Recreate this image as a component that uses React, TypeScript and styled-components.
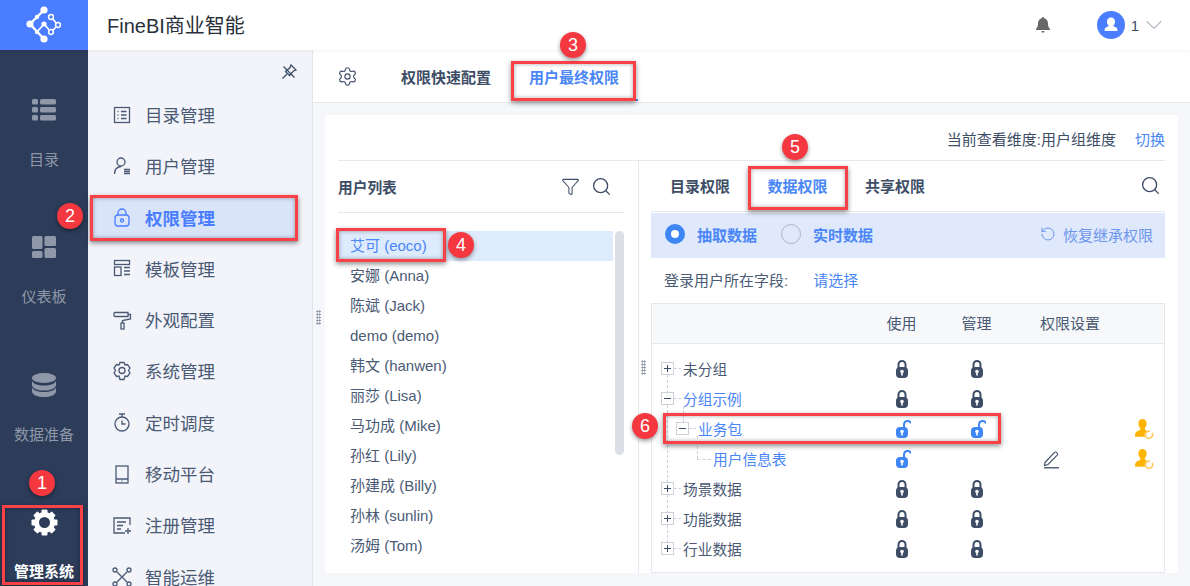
import React from "react";
import styled, { createGlobalStyle } from "styled-components";
import { Filter, Search, RotateCcw, Settings, ChevronDown } from "lucide-react";

const GlobalStyle = createGlobalStyle`
  html, body { margin: 0; padding: 0; background: #f5f7fa; }
  * { box-sizing: border-box; }
  body { font-family: "Liberation Sans", "Noto Sans CJK SC", sans-serif; color: #3d4d66; }
`;

const BLUE = "#4a86f7";
const DARK = "#3d4d66";

const Page = styled.div`
  position: relative;
  width: 1190px;
  height: 586px;
  overflow: hidden;
  display: flex;
  flex-direction: column;
`;

const TopBar = styled.header`
  height: 50px;
  flex: none;
  display: flex;
  align-items: center;
  background: #fff;
  position: relative;
  z-index: 2;
  box-shadow: 0 1px 4px rgba(0, 0, 0, 0.05);
`;

const LogoBox = styled.div`
  width: 88px;
  height: 50px;
  background: #4a7dff;
  display: flex;
  align-items: center;
  justify-content: center;
`;

const AppTitle = styled.div`
  margin-left: 19px;
  padding-bottom: 2px;
  font-size: 20px;
  color: #2a2f3a;
  flex: 1;
`;

const BellWrap = styled.div`
  width: 16px;
  height: 18px;
  margin-right: 46px;
  display: flex;
`;

const Avatar = styled.div`
  width: 28px;
  height: 28px;
  border-radius: 50%;
  background: #4a7dff;
  display: flex;
  align-items: center;
  justify-content: center;
`;

const UserNumber = styled.span`
  margin-left: 6px;
  font-size: 15px;
  color: #3d4d66;
`;

const UserChevron = styled.div`
  margin: 0 22px 0 1px;
  display: flex;
  color: #9aa5b4;
`;

const Body = styled.div`
  flex: 1;
  display: flex;
  min-height: 0;
`;

const Rail = styled.nav`
  width: 88px;
  flex: none;
  background: #2c3c59;
  display: flex;
  flex-direction: column;
`;

const RailItem = styled.div<{ $active?: boolean }>`
  height: 137.4px;
  flex: none;
  padding-top: 48px;
  display: flex;
  flex-direction: column;
  align-items: center;
  color: ${(p) => (p.$active ? "#fff" : "#8f98a8")};
`;

const RailIcon = styled.div`
  height: 24px;
  display: flex;
  align-items: center;
  justify-content: center;
`;

const RailLabel = styled.div<{ $active?: boolean }>`
  margin-top: 28px;
  line-height: 20px;
  font-size: 15px;
  font-weight: ${(p) => (p.$active ? 700 : 400)};
`;

const SideMenu = styled.aside`
  width: 225px;
  flex: none;
  background: #f2f4f9;
  border-right: 1px solid #e2e5ea;
`;

const PinRow = styled.div`
  height: 43px;
  padding: 13px 14px 0 0;
  display: flex;
  justify-content: flex-end;
  color: #3d4d66;
`;

const MenuList = styled.div`
  margin-right: 14px;
  display: flex;
  flex-direction: column;
  gap: 5.3px;
`;

const MenuItem = styled.div<{ $active?: boolean }>`
  height: 46px;
  flex: none;
  padding: 0 0 3px 22px;
  margin-left: 2px;
  display: flex;
  align-items: center;
  gap: 11px;
  font-size: 17.5px;
  font-weight: ${(p) => (p.$active ? 700 : 400)};
  color: ${(p) => (p.$active ? "#4a7dff" : "#4a5a75")};
  background: ${(p) => (p.$active ? "#d9e4f8" : "transparent")};
`;

const MenuGlyph = styled.svg`
  width: 24px;
  height: 24px;
  margin-left: -2px;
  flex: none;
  fill: none;
  stroke: currentColor;
  stroke-width: 1.3;
`;

const Main = styled.main`
  flex: 1;
  min-width: 0;
  display: flex;
  flex-direction: column;
`;

const TabBar = styled.div`
  height: 53px;
  flex: none;
  background: #fff;
  border-bottom: 1px solid #e6e8ec;
  display: flex;
  align-items: center;
  padding-left: 24px;
`;

const GearWrap = styled.div`
  width: 64px;
  display: flex;
  color: ${DARK};
`;

const TopTab = styled.div`
  width: 110px;
  font-size: 15px;
  font-weight: 700;
  color: ${DARK};
`;

const ActiveTopTab = styled.div`
  width: 127px;
  height: 51px;
  align-self: flex-start;
  padding: 4px 1px 0 0;
  display: flex;
  align-items: center;
  justify-content: center;
  font-size: 15px;
  font-weight: 700;
  color: ${BLUE};
  border-bottom: 2px solid ${BLUE};
`;

const Content = styled.div`
  flex: 1;
  min-height: 0;
  padding: 12px 12px 13px;
  background: #f5f7fa;
  display: flex;
`;

const Card = styled.section`
  flex: 1;
  background: #fff;
  padding: 0 13px;
  display: flex;
  flex-direction: column;
  min-width: 0;
`;

const ViewBar = styled.div`
  height: 46px;
  flex: none;
  border-bottom: 1px solid #e6e8ec;
  display: flex;
  justify-content: flex-end;
  align-items: center;
  gap: 19px;
  font-size: 15px;
  padding-top: 2px;
`;

const LinkText = styled.span`
  color: ${BLUE};
`;

const Columns = styled.div`
  flex: 1;
  min-height: 0;
  display: flex;
`;

const UserPanel = styled.div`
  width: 301px;
  flex: none;
  padding-right: 13px;
  border-right: 1px solid #e6e8ec;
  display: flex;
  flex-direction: column;
`;

const PanelHeader = styled.div`
  height: 52px;
  flex: none;
  border-bottom: 1px solid #e6e8ec;
  display: flex;
  align-items: center;
  justify-content: space-between;
  padding-right: 13px;
`;

const PanelTitle = styled.div`
  font-size: 14.7px;
  font-weight: 700;
  color: ${DARK};
`;

const IconRow = styled.div`
  display: flex;
  align-items: center;
  gap: 11px;
  color: ${DARK};
`;

const ListArea = styled.div`
  margin-top: 18px;
  display: flex;
  gap: 2px;
  flex: 1;
  min-height: 0;
`;

const UserList = styled.div`
  width: 275px;
  flex: none;
`;

const UserRow = styled.div<{ $active?: boolean }>`
  height: 30px;
  padding-left: 12px;
  line-height: 29px;
  font-size: 15px;
  color: ${(p) => (p.$active ? BLUE : "#4a5a75")};
  background: ${(p) => (p.$active ? "#deebfc" : "transparent")};
`;

const ScrollTrack = styled.div`
  width: 9px;
  height: 224px;
  border-radius: 5px;
  background: #dcdfe6;
`;

const PermPanel = styled.div`
  flex: 1;
  min-width: 0;
  padding-left: 12px;
  display: flex;
  flex-direction: column;
`;

const PermTabs = styled.div`
  height: 51px;
  flex: none;
  border-bottom: 1px solid #e6e8ec;
  display: flex;
  align-items: center;
  gap: 37.5px;
  padding: 0 4px 2px 19px;
`;

const PermTab = styled.div<{ $active?: boolean }>`
  font-size: 15px;
  font-weight: 700;
  color: ${(p) => (p.$active ? BLUE : DARK)};
`;

const PermSearch = styled.div`
  margin-left: auto;
  display: flex;
  color: ${DARK};
`;

const ModeBar = styled.div`
  height: 45px;
  margin-top: 1px;
  flex: none;
  background: #dfe9fb;
  display: flex;
  align-items: center;
  padding: 0 12px 3px 14px;
  font-size: 15px;
`;

const Radio = styled.span<{ $checked?: boolean }>`
  width: 20px;
  height: 20px;
  flex: none;
  border-radius: 50%;
  background: ${(p) => (p.$checked ? "#fff" : "transparent")};
  border: ${(p) => (p.$checked ? "6px solid #3f86f5" : "1px solid #aeb6c4")};
  margin-right: 12px;
`;

const ModeLabel = styled.span`
  width: 84px;
  color: ${BLUE};
  font-weight: 700;
`;

const ModeSpacer = styled.span`
  flex: 1;
`;

const RestoreLink = styled.span`
  display: flex;
  align-items: center;
  gap: 7px;
  color: #6d95ee;
`;

const LoginRow = styled.div`
  height: 45px;
  flex: none;
  padding: 0 0 3px 13px;
  display: flex;
  align-items: center;
  gap: 25px;
  font-size: 15px;
  color: #4a5a75;
`;

const PermTable = styled.div`
  height: 270px;
  flex: none;
  border: 1px solid #e6e8ec;
  display: flex;
  flex-direction: column;
`;

const RowGrid = styled.div`
  display: grid;
  grid-template-columns: 212px 75px 75px 75px 1fr;
  align-items: center;
`;

const TableHead = styled(RowGrid)`
  height: 40px;
  flex: none;
  background: #f7f8fa;
  border-bottom: 1px solid #e6e8ec;
  padding-bottom: 3px;
  font-size: 15px;
  color: #4a5a75;
`;

const HeadCell = styled.div<{ $wide?: boolean }>`
  text-align: ${(p) => (p.$wide ? "left" : "center")};
  padding-left: ${(p) => (p.$wide ? 26 : 0)}px;
  ${(p) => p.$wide && "grid-column: 4 / span 2;"}
`;

const TreeBody = styled.div`
  position: relative;
  padding-top: 10px;
`;

const TreeRow = styled(RowGrid)`
  height: 30px;
  position: relative;
`;

const NameCell = styled.div<{ $level: number; $link?: boolean }>`
  padding: 0 0 2px ${(p) => 9 + p.$level * 15}px;
  display: flex;
  align-items: center;
  font-size: 14.7px;
  color: ${(p) => (p.$link ? BLUE : "#4a5a75")};
`;

const Expander = styled.span`
  width: 13px;
  height: 13px;
  flex: none;
  position: relative;
  z-index: 1;
  background: #fff;
  border: 1px solid #cdd2da;
  margin-right: 9px;

  &::after {
    content: "";
    position: absolute;
    left: 12px;
    top: 5px;
    width: 7px;
    border-top: 1px dashed #cdd2da;
  }
`;

const ExpanderBar = styled.span<{ $vertical?: boolean }>`
  position: absolute;
  background: ${DARK};
  left: ${(p) => (p.$vertical ? 5 : 2)}px;
  top: ${(p) => (p.$vertical ? 2 : 5)}px;
  width: ${(p) => (p.$vertical ? 1 : 7)}px;
  height: ${(p) => (p.$vertical ? 7 : 1)}px;
`;

const LeafGap = styled.span`
  width: 22px;
`;

const Cell = styled.div`
  display: flex;
  justify-content: center;
`;

const EndCell = styled.div`
  display: flex;
  justify-content: flex-end;
  padding-right: 8px;
`;

const TreeLine = styled.span<{ $x: number; $y: number; $w?: number; $h?: number }>`
  position: absolute;
  left: ${(p) => p.$x}px;
  top: ${(p) => p.$y}px;
  width: ${(p) => p.$w ?? 0}px;
  height: ${(p) => p.$h ?? 0}px;
  border-left: ${(p) => (p.$h ? "1px dashed #cdd2da" : "none")};
  border-top: ${(p) => (p.$w ? "1px dashed #cdd2da" : "none")};
`;

const Grip = styled.div<{ $x: number; $y: number }>`
  position: absolute;
  left: ${(p) => p.$x}px;
  top: ${(p) => p.$y}px;
  width: 5px;
  height: 15px;
  background-image: radial-gradient(#8a93a3 0.8px, transparent 1px);
  background-size: 2.5px 3px;
`;

const MarkBox = styled.div<{ $x: number; $y: number; $w: number; $h: number }>`
  position: absolute;
  z-index: 3;
  left: ${(p) => p.$x}px;
  top: ${(p) => p.$y}px;
  width: ${(p) => p.$w}px;
  height: ${(p) => p.$h}px;
  border: 3px solid #fb4148;
  box-shadow: 0 2px 5px rgba(0, 0, 0, 0.45), inset 0 0 4px rgba(0, 0, 0, 0.35);
  pointer-events: none;
`;

const Badge = styled.div<{ $x: number; $y: number }>`
  position: absolute;
  z-index: 4;
  left: ${(p) => p.$x - 13}px;
  top: ${(p) => p.$y - 13}px;
  width: 26px;
  height: 26px;
  border-radius: 50%;
  background: #f5383f;
  color: #fff;
  font-size: 18px;
  display: flex;
  align-items: center;
  justify-content: center;
  box-shadow: 0 2px 4px rgba(0, 0, 0, 0.4);
`;

const Logo = () => (
  <svg width="60" height="50" viewBox="14 0 60 50" fill="none" stroke="#fff">
    <path d="M44 10 30 24 44 39" strokeWidth="2.4" />
    <path d="M37 32 44 24 51 32 58 25 51 17" strokeWidth="1.6" />
    <g fill="#fff" stroke="none">
      <circle cx="44" cy="10" r="3.6" />
      <circle cx="30" cy="24" r="3.6" />
      <circle cx="44" cy="39" r="3.6" />
      <circle cx="37" cy="17" r="2.2" />
      <circle cx="37" cy="32" r="2.2" />
      <circle cx="44" cy="24" r="2.6" />
    </g>
    <g fill="#4a7dff" strokeWidth="1.5">
      <circle cx="51" cy="17" r="2.4" />
      <circle cx="58" cy="25" r="2.4" />
      <circle cx="51" cy="32" r="2.4" />
    </g>
  </svg>
);

const Bell = () => (
  <svg width="16" height="18" viewBox="0 0 16 18" fill="#666">
    <path d="M8 1a1.2 1.2 0 0 1 1.2 1.2C11.8 2.9 13 5 13 7.6c0 2.6.6 4 2 5.4v1H1v-1c1.4-1.4 2-2.8 2-5.4C3 5 4.2 2.9 6.8 2.2A1.2 1.2 0 0 1 8 1z" />
    <rect x="6.5" y="15" width="3" height="1.4" rx="0.7" />
  </svg>
);

const AvatarGlyph = () => (
  <svg width="18" height="18" viewBox="0 0 18 18" fill="#fff">
    <path d="M9 1.5c2.6 0 4 1.800 4 4.200 0 1.600-.6 2.900-1.600 3.700v.9c2 .6 4 1.500 4 3.200v1.500H2.600v-1.500c0-1.700 2-2.600 4-3.200v-.9C5.600 8.600 5 7.300 5 5.700 5 3.300 6.400 1.500 9 1.500z" />
  </svg>
);

const RailList = () => (
  <svg width="24" height="22" viewBox="0 0 24 22" fill="currentColor">
    <rect x="0" y="0" width="6" height="5.500" rx="1.500" />
    <rect x="8" y="0" width="16" height="5.500" rx="1.500" />
    <rect x="0" y="8" width="6" height="5.500" rx="1.500" />
    <rect x="8" y="8" width="16" height="5.500" rx="1.500" />
    <rect x="0" y="16" width="6" height="5.500" rx="1.500" />
    <rect x="8" y="16" width="16" height="5.500" rx="1.500" />
  </svg>
);

const RailBoard = () => (
  <svg width="24" height="22" viewBox="0 0 24 22" fill="currentColor">
    <rect x="0" y="0" width="10.500" height="13" rx="1.500" />
    <rect x="12.500" y="0" width="11.500" height="10" rx="1.500" />
    <rect x="0" y="15" width="10.500" height="7" rx="1.500" />
    <rect x="12.500" y="12" width="11.500" height="10" rx="1.500" />
  </svg>
);

const RailData = () => (
  <svg width="24" height="24" viewBox="0 0 24 24" fill="currentColor">
    <ellipse cx="12" cy="5" rx="12" ry="5" />
    <path d="M0 8c1.500 3 6 4.500 12 4.500S22.500 11 24 8v4.500c-.8 3-5.500 5-12 5s-11.200-2-12-5z" />
    <path d="M0 14.500c1.500 3 6 4.500 12 4.500s10.500-1.500 12-4.500V19c-.8 3-5.500 5-12 5S.8 22 0 19z" />
  </svg>
);

const RailGear = () => (
  <svg width="27" height="27" viewBox="0 0 27 27" fill="#fff">
    {[0, 45, 90, 135, 180, 225, 270, 315].map((a) => (
      <rect key={a} x="10.500" y="0.500" width="6" height="6" rx="1" transform={`rotate(${a} 13.500 13.500)`} />
    ))}
    <circle cx="13.500" cy="13.500" r="8" fill="none" stroke="#fff" strokeWidth="5" />
  </svg>
);

const Pin = () => (
  <svg width="18" height="18" viewBox="0 0 18 18" fill="none" stroke="currentColor" strokeWidth="1.300">
    <path d="M11 2 16 7 13.500 8 9.500 12.500 5.500 8.500 10 4.500z" />
    <path d="M7 11 2.500 15.500M3.500 3.500l11 11" />
  </svg>
);

const menuIcons: Record<string, React.ReactNode> = {
  catalog: (
    <>
      <rect x="4.500" y="4.500" width="15" height="15" />
      <path d="M7.500 8.500h1M11 8.500h5.500M7.500 12h1M11 12h5.500M7.500 15.500h1M11 15.500h5.500" />
    </>
  ),
  user: (
    <>
      <circle cx="11" cy="8" r="4" />
      <path d="M4.500 20c0-4.500 2.500-7 6.500-7.500" />
      <path d="M14 15.500h6M14 17.500h6M14 19.500h6" />
    </>
  ),
  lock: (
    <>
      <rect x="5" y="10" width="14" height="11" rx="3" />
      <path d="M8 10V8a4 4 0 0 1 8 0v2" />
      <circle cx="12" cy="15.500" r="1.500" />
    </>
  ),
  template: (
    <>
      <rect x="4.500" y="4.500" width="15" height="4" />
      <rect x="4.500" y="11" width="6.500" height="8.500" />
      <path d="M14 11.500h6M14 15h6M14 18.500h6" />
    </>
  ),
  brush: (
    <>
      <path d="M5 4.500h13v4H5a1 1 0 0 1-1-1v-2a1 1 0 0 1 1-1z" />
      <path d="M18 6.500h2.500v4.500L12.500 12.500V15" />
      <rect x="11" y="15" width="3" height="6" />
    </>
  ),
  gear: (
    <path d="M10 3.500h4l1 2.500 2.500-.5 2.500 3.500-1.500 2.500 1.500 2.500L17.500 17.500 15 17l-1 3.500h-4L9 17l-2.500.5L4 14l1.500-2.500L4 9l2.500-3.500L9 6zM12 8.500a3 3 0 1 0 0 6 3 3 0 0 0 0-6z" />
  ),
  timer: (
    <>
      <circle cx="12" cy="14" r="7" />
      <path d="M9 4h6M12 4v3M12 10.500V14h3.500" />
    </>
  ),
  mobile: (
    <>
      <rect x="6" y="4" width="12" height="17" />
      <path d="M6 17h12M12 18.500v1" />
    </>
  ),
  register: (
    <>
      <path d="M20 12V5H4v15h11" />
      <path d="M7 9h9M7 12.500h6M7 16h4M18 15v6M15 18h6" />
    </>
  ),
  ops: (
    <>
      <circle cx="5" cy="6" r="2" />
      <circle cx="19" cy="6" r="2" />
      <path d="M7 8l10 10M17 8 7 18" />
      <circle cx="5" cy="20" r="2" />
      <circle cx="19" cy="20" r="2" />
    </>
  ),
};

const MenuIcon = ({ name }: { name: string }) => (
  <MenuGlyph viewBox="0 0 24 24">{menuIcons[name]}</MenuGlyph>
);

const LockIcon = ({ open }: { open?: boolean }) => (
  <svg width="18" height="20" viewBox="-2 0 18 20">
    <path
      d={open ? "M9 10V5.500a3.600 3.600 0 0 1 7 -1" : "M3.500 10V5.500a3.500 3.500 0 0 1 7 0V10"}
      fill="none"
      stroke={open ? "#3f86f5" : DARK}
      strokeWidth="2"
    />
    <rect x="1" y="8" width="12" height="11" rx="4" fill={open ? "#3f86f5" : DARK} />
    <circle cx="7" cy="12.500" r="1.800" fill="#fff" />
    <rect x="6.200" y="13" width="1.600" height="3.500" fill="#fff" />
  </svg>
);

const PencilIcon = () => (
  <svg width="18" height="20" viewBox="0 0 18 20" fill="none" stroke={DARK} strokeWidth="1.100">
    <path d="M2 13.500 11.500 3.500a1.300 1.300 0 0 1 2 0l.7.700a1.300 1.300 0 0 1 0 2L5 15.500l-3.500 1z" />
    <path d="M1 18.800h15" strokeWidth="1.300" />
  </svg>
);

const GrantIcon = () => (
  <svg width="22" height="20" viewBox="0 0 20 18">
    <path
      fill="#ffb400"
      d="M7.500 0C10 0 11.500 1.800 11.500 4.300c0 1.700-.8 3.100-1.700 3.900v1.300c.7.300 1.300.6 1.800 1-1.200 1-1.800 2.500-1.800 4.100 0 .6 0 1 .2 1.400H1v-2c0-2 2.700-3.400 4.700-4V8.200C4.800 7.400 4 6 4 4.300 4 1.800 5.500 0 7.500 0z"
    />
    <path d="M16.500 12.500a3.300 3.300 0 1 1-2 -1.500" fill="none" stroke="#ffc861" strokeWidth="1.500" />
  </svg>
);

const menuItems = [
  { icon: "catalog", label: "目录管理" },
  { icon: "user", label: "用户管理" },
  { icon: "lock", label: "权限管理", active: true },
  { icon: "template", label: "模板管理" },
  { icon: "brush", label: "外观配置" },
  { icon: "gear", label: "系统管理" },
  { icon: "timer", label: "定时调度" },
  { icon: "mobile", label: "移动平台" },
  { icon: "register", label: "注册管理" },
  { icon: "ops", label: "智能运维" },
];

const users = [
  "艾可 (eoco)",
  "安娜 (Anna)",
  "陈斌 (Jack)",
  "demo (demo)",
  "韩文 (hanwen)",
  "丽莎 (Lisa)",
  "马功成 (Mike)",
  "孙红 (Lily)",
  "孙建成 (Billy)",
  "孙林 (sunlin)",
  "汤姆 (Tom)",
];

type TreeNode = {
  name: string;
  level: number;
  expander?: "plus" | "minus";
  link?: boolean;
  use: "locked" | "open";
  manage?: "locked" | "open";
  pencil?: boolean;
  grant?: boolean;
};

const tree: TreeNode[] = [
  { name: "未分组", level: 0, expander: "plus", use: "locked", manage: "locked" },
  { name: "分组示例", level: 0, expander: "minus", link: true, use: "locked", manage: "locked" },
  { name: "业务包", level: 1, expander: "minus", link: true, use: "open", manage: "open", grant: true },
  { name: "用户信息表", level: 2, link: true, use: "open", pencil: true, grant: true },
  { name: "场景数据", level: 0, expander: "plus", use: "locked", manage: "locked" },
  { name: "功能数据", level: 0, expander: "plus", use: "locked", manage: "locked" },
  { name: "行业数据", level: 0, expander: "plus", use: "locked", manage: "locked" },
];

const marks = [
  { x: 2, y: 505, w: 81, h: 80 },
  { x: 90, y: 195, w: 208, h: 46 },
  { x: 511, y: 61, w: 125, h: 40 },
  { x: 336, y: 228, w: 110, h: 34 },
  { x: 748, y: 166, w: 100, h: 44 },
  { x: 663, y: 413, w: 338, h: 31 },
];

const badges = [
  { n: 1, x: 42, y: 483 },
  { n: 2, x: 70, y: 216 },
  { n: 3, x: 573, y: 45 },
  { n: 4, x: 461, y: 245 },
  { n: 5, x: 795, y: 147 },
  { n: 6, x: 645, y: 426 },
];

export default function App() {
  return (
    <Page>
      <GlobalStyle />
      <TopBar>
        <LogoBox>
          <Logo />
        </LogoBox>
        <AppTitle>FineBI商业智能</AppTitle>
        <BellWrap>
          <Bell />
        </BellWrap>
        <Avatar>
          <AvatarGlyph />
        </Avatar>
        <UserNumber>1</UserNumber>
        <UserChevron>
          <ChevronDown size={28} strokeWidth={0.9} />
        </UserChevron>
      </TopBar>
      <Body>
        <Rail>
          <RailItem>
            <RailIcon>
              <RailList />
            </RailIcon>
            <RailLabel>目录</RailLabel>
          </RailItem>
          <RailItem>
            <RailIcon>
              <RailBoard />
            </RailIcon>
            <RailLabel>仪表板</RailLabel>
          </RailItem>
          <RailItem>
            <RailIcon>
              <RailData />
            </RailIcon>
            <RailLabel>数据准备</RailLabel>
          </RailItem>
          <RailItem $active>
            <RailIcon>
              <RailGear />
            </RailIcon>
            <RailLabel $active>管理系统</RailLabel>
          </RailItem>
        </Rail>
        <SideMenu>
          <PinRow>
            <Pin />
          </PinRow>
          <MenuList>
            {menuItems.map((m) => (
              <MenuItem key={m.label} $active={m.active}>
                <MenuIcon name={m.icon} />
                {m.label}
              </MenuItem>
            ))}
          </MenuList>
        </SideMenu>
        <Main>
          <TabBar>
            <GearWrap>
              <Settings size={21} strokeWidth={1.3} />
            </GearWrap>
            <TopTab>权限快速配置</TopTab>
            <ActiveTopTab>用户最终权限</ActiveTopTab>
          </TabBar>
          <Content>
            <Card>
              <ViewBar>
                <span>当前查看维度:用户组维度</span>
                <LinkText>切换</LinkText>
              </ViewBar>
              <Columns>
                <UserPanel>
                  <PanelHeader>
                    <PanelTitle>用户列表</PanelTitle>
                    <IconRow>
                      <Filter size={19} strokeWidth={1.3} />
                      <Search size={21} strokeWidth={1.5} />
                    </IconRow>
                  </PanelHeader>
                  <ListArea>
                    <UserList>
                      {users.map((u, i) => (
                        <UserRow key={u} $active={i === 0}>
                          {u}
                        </UserRow>
                      ))}
                    </UserList>
                    <ScrollTrack />
                  </ListArea>
                </UserPanel>
                <PermPanel>
                  <PermTabs>
                    <PermTab>目录权限</PermTab>
                    <PermTab $active>数据权限</PermTab>
                    <PermTab>共享权限</PermTab>
                    <PermSearch>
                      <Search size={21} strokeWidth={1.5} />
                    </PermSearch>
                  </PermTabs>
                  <ModeBar>
                    <Radio $checked />
                    <ModeLabel>抽取数据</ModeLabel>
                    <Radio />
                    <ModeLabel>实时数据</ModeLabel>
                    <ModeSpacer />
                    <RestoreLink>
                      <RotateCcw size={16} strokeWidth={1.5} />
                      恢复继承权限
                    </RestoreLink>
                  </ModeBar>
                  <LoginRow>
                    <span>登录用户所在字段:</span>
                    <LinkText>请选择</LinkText>
                  </LoginRow>
                  <PermTable>
                    <TableHead>
                      <span />
                      <HeadCell>使用</HeadCell>
                      <HeadCell>管理</HeadCell>
                      <HeadCell $wide>权限设置</HeadCell>
                    </TableHead>
                    <TreeBody>
                      <TreeLine $x={15} $y={31} $h={168} />
                      <TreeLine $x={31} $y={62} $h={16} />
                      <TreeLine $x={45} $y={92} $h={23} />
                      <TreeLine $x={45} $y={115} $w={14} />
                      {tree.map((node) => (
                        <TreeRow key={node.name}>
                          <NameCell $level={node.level} $link={node.link}>
                            {node.expander ? (
                              <Expander>
                                <ExpanderBar />
                                {node.expander === "plus" && <ExpanderBar $vertical />}
                              </Expander>
                            ) : (
                              <LeafGap />
                            )}
                            {node.name}
                          </NameCell>
                          <Cell>
                            <LockIcon open={node.use === "open"} />
                          </Cell>
                          <Cell>{node.manage && <LockIcon open={node.manage === "open"} />}</Cell>
                          <Cell>{node.pencil && <PencilIcon />}</Cell>
                          <EndCell>{node.grant && <GrantIcon />}</EndCell>
                        </TreeRow>
                      ))}
                    </TreeBody>
                  </PermTable>
                </PermPanel>
              </Columns>
            </Card>
          </Content>
        </Main>
      </Body>
      <Grip $x={316} $y={310} />
      <Grip $x={641} $y={360} />
      {marks.map((m) => (
        <MarkBox key={`${m.x}-${m.y}`} $x={m.x} $y={m.y} $w={m.w} $h={m.h} />
      ))}
      {badges.map((b) => (
        <Badge key={b.n} $x={b.x} $y={b.y}>
          {b.n}
        </Badge>
      ))}
    </Page>
  );
}
